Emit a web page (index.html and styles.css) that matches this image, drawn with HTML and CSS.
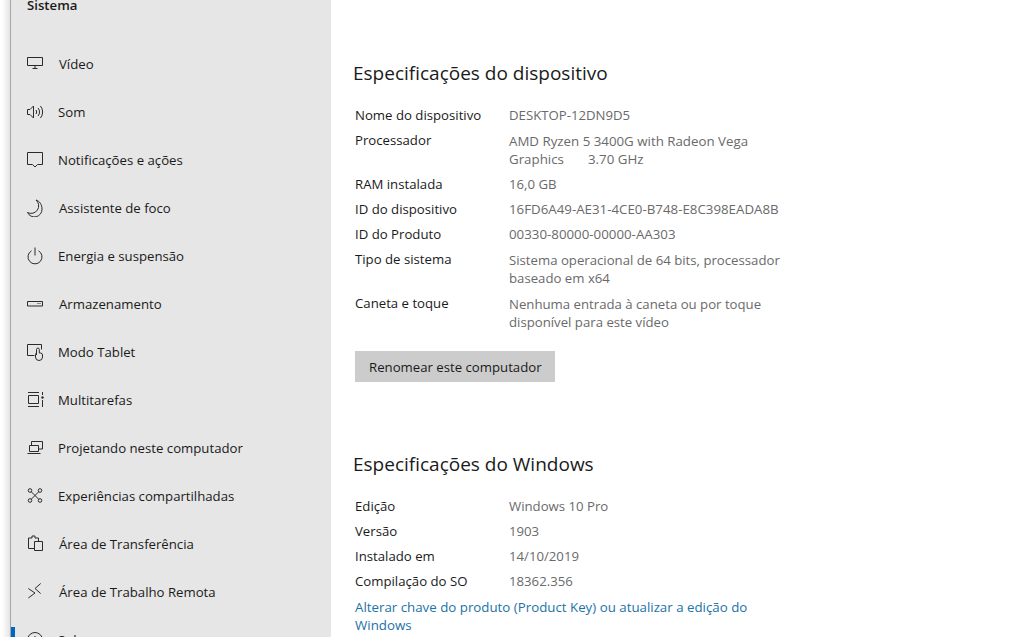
FILE: index.html
```html
<!DOCTYPE html>
<html lang="pt-BR">
<head>
<meta charset="utf-8">
<title>Sistema - Sobre</title>
<link rel="stylesheet" href="styles.css">
</head>
<body>
<div class="edge"></div>
<nav class="sidebar">
  <div class="title">Sistema</div>
  <a class="item nudge"><svg class="icon" viewBox="0 0 18 18"><path d="M1.500 2.500h15v8h-15zM9 10.500V13M6.500 13.500h5"/></svg><span>Vídeo</span></a>
  <a class="item"><svg class="icon" viewBox="0 0 18 18"><path d="M1.500 6.500H4L7.500 3v12L4 11.500H1.500zM10 7a3.500 3.500 0 0 1 0 4M12 5a6 6 0 0 1 0 8M14.500 3a9.500 9.500 0 0 1 0 12"/></svg><span>Som</span></a>
  <a class="item"><svg class="icon" viewBox="0 0 18 18"><path d="M1.500 1.500h15v12h-5L9 16l-2.500-2.500h-5z"/></svg><span>Notificações e ações</span></a>
  <a class="item nudge"><svg class="icon" viewBox="0 0 18 18"><path d="M10 1a7.600 7.600 0 0 1-8.500 12.500 7.600 7.600 0 0 0 14.500-3.500C16 5.500 13.500 2 10 1z"/></svg><span>Assistente de foco</span></a>
  <a class="item"><svg class="icon" viewBox="0 0 18 18"><path d="M5.500 3.800a7 7 0 1 0 7 0M9 .5V8.500"/></svg><span>Energia e suspensão</span></a>
  <a class="item nudge"><svg class="icon" viewBox="0 0 18 18"><path d="M1.500 6.500h15v4.500h-15zM11.500 8.500h1M13.500 8.500h1"/></svg><span>Armazenamento</span></a>
  <a class="item"><svg class="icon" viewBox="0 0 18 18"><path d="M8.500 12.500H1.500v-11h14v5M10.500 12V6.500a1.400 1.400 0 0 1 2.800 0v3.500h1.200a2 2 0 0 1 2 2v2a3.500 3.500 0 0 1-7 0v-2.500a1.500 1.500 0 0 1 1-1.500"/></svg><span>Modo Tablet</span></a>
  <a class="item"><svg class="icon" viewBox="0 0 18 18"><path d="M2 1.500h11M2.500 4.500h10v8h-10zM2 15.500h11M16.500 1v3M16.500 9v7"/><circle class="dot" cx="16.500" cy="6.500" r="1.200"/></svg><span>Multitarefas</span></a>
  <a class="item"><svg class="icon" viewBox="0 0 18 18"><path d="M5.500 6V2.500h11V10H13M3.500 6.500h9v6h-9zM1.500 14.500h13"/></svg><span>Projetando neste computador</span></a>
  <a class="item"><svg class="icon" viewBox="0 0 18 18"><circle cx="4" cy="3.500" r="1.800"/><circle cx="14" cy="3.500" r="1.800"/><circle cx="4" cy="13.500" r="1.800"/><circle cx="14" cy="13.500" r="1.800"/><path d="M5.300 4.800l7.400 7.400M12.700 4.800l-7.400 7.400"/></svg><span>Experiências compartilhadas</span></a>
  <a class="item nudge"><svg class="icon" viewBox="0 0 18 18"><path d="M8 13.500H2.500V3H6V1h3v2h3.500v3M8.500 6.500h8v9h-8z"/></svg><span>Área de Transferência</span></a>
  <a class="item nudge"><svg class="icon" viewBox="0 0 18 18"><path d="M2.300 5.500L9 10l-6.700 5M14.700.500L9 5.500l5.700 5"/></svg><span>Área de Trabalho Remota</span></a>
  <a class="item current"><svg class="icon" viewBox="0 0 18 18"><circle cx="9" cy="9" r="7.500"/><path d="M9 8v5M9 5v1.500"/></svg><span>Sobre</span></a>
</nav>
<main class="content">
  <section class="device">
    <h2>Especificações do dispositivo</h2>
    <dl class="specs">
      <div class="row"><dt>Nome do dispositivo</dt><dd>DESKTOP-12DN9D5</dd></div>
      <div class="row multi"><dt>Processador</dt><dd class="wide">AMD Ryzen 5 3400G with Radeon Vega Graphics&nbsp;&nbsp;&nbsp;&nbsp;&nbsp;&nbsp; 3.70 GHz</dd></div>
      <div class="row"><dt>RAM instalada</dt><dd>16,0 GB</dd></div>
      <div class="row"><dt>ID do dispositivo</dt><dd class="wide">16FD6A49-AE31-4CE0-B748-E8C398EADA8B</dd></div>
      <div class="row"><dt>ID do Produto</dt><dd class="wide">00330-80000-00000-AA303</dd></div>
      <div class="row multi"><dt>Tipo de sistema</dt><dd>Sistema operacional de 64 bits, processador baseado em x64</dd></div>
      <div class="row multi"><dt>Caneta e toque</dt><dd>Nenhuma entrada à caneta ou por toque disponível para este vídeo</dd></div>
    </dl>
    <button class="rename" type="button">Renomear este computador</button>
  </section>
  <section class="windows">
    <h2>Especificações do Windows</h2>
    <dl class="specs">
      <div class="row"><dt>Edição</dt><dd>Windows 10 Pro</dd></div>
      <div class="row"><dt>Versão</dt><dd>1903</dd></div>
      <div class="row"><dt>Instalado em</dt><dd>14/10/2019</dd></div>
      <div class="row"><dt>Compilação do SO</dt><dd>18362.356</dd></div>
    </dl>
    <a class="link">Alterar chave do produto (Product Key) ou atualizar a edição do Windows</a>
  </section>
</main>
</body>
</html>
```
FILE: styles.css
```css
* { box-sizing: border-box; }
html, body { height: 100%; overflow: hidden; }
body {
  margin: 0;
  display: flex;
  background: #fff;
  color: #1a1a1a;
  font-family: "Open Sans", "Noto Sans", sans-serif;
  font-size: 13.2px;
}
.edge {
  flex: 0 0 10px;
  background: linear-gradient(to right, #fff 20%, #e4e4e4);
}
.sidebar {
  flex: 0 0 321px;
  height: 100%;
  background: #e6e6e6;
  border-left: 1px solid #a6a6a6;
}
.title {
  margin-top: -5px;
  height: 45px;
  padding-left: 16px;
  line-height: 20px;
  font-weight: 600;
}
.item {
  position: relative;
  display: flex;
  align-items: center;
  gap: 14px;
  height: 48px;
  padding-left: 15px;
}
.nudge span { margin-left: 1px; }
.current::before {
  content: "";
  position: absolute;
  left: 0;
  top: 11px;
  bottom: 0;
  width: 4px;
  background: #0067c0;
}
.icon {
  flex: 0 0 18px;
  width: 18px;
  height: 18px;
  fill: none;
  stroke: #2b2b2b;
  stroke-width: 1;
}
.dot { fill: #2b2b2b; stroke: none; }
.content {
  flex: 1;
  padding-left: 24px;
  min-width: 0;
}
h2 {
  margin: 0 0 0 -2px;
  font-size: 19px;
  font-weight: 400;
  line-height: 28px;
  color: #1a1a1a;
}
.device { padding-top: 59px; }
.windows { padding-top: 68px; }
.specs { margin: 19px 0 0; width: 440px; }
.row {
  display: flex;
  padding-bottom: 7px;
  line-height: 18px;
}
dt { flex: 0 0 154px; }
dd { margin: 0; flex: 1; color: #6a6a6a; }
dd.wide { font-size: 13.3px; }
.multi dd { padding-top: 1px; }
.rename {
  display: block;
  width: 200px;
  height: 31px;
  margin-top: 13px;
  padding: 0 0 0 14px;
  border: 0;
  background: #ccc;
  color: #1a1a1a;
  font: inherit;
  text-align: left;
}
.link {
  display: block;
  width: 420px;
  margin-top: 1px;
  font-size: 13.3px;
  line-height: 18px;
  color: #1b73a6;
}
```
